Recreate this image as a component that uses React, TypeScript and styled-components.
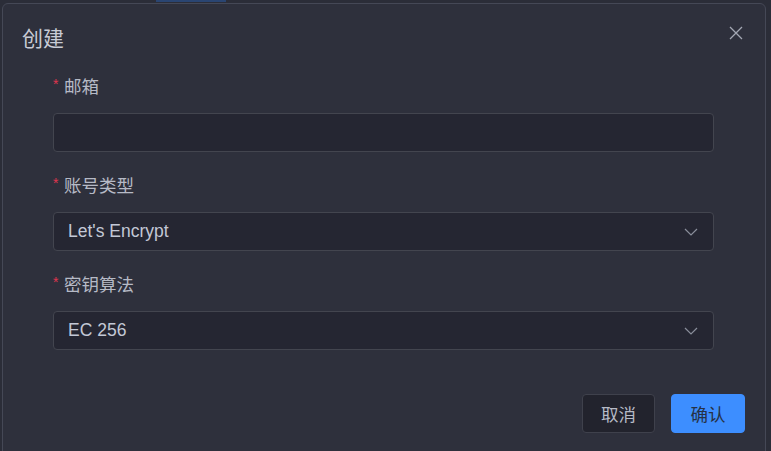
import React from 'react';
import styled, { createGlobalStyle } from 'styled-components';

const GlobalStyle = createGlobalStyle`
  html, body {
    margin: 0;
    padding: 0;
    background: #2b2d38;
    overflow: hidden;
    font-family: "Liberation Sans", "Noto Sans CJK SC", sans-serif;
  }
`;

const Page = styled.div`
  width: 771px;
  height: 451px;
  overflow: hidden;
`;

const TabLine = styled.div`
  width: 70px;
  height: 2px;
  margin-left: 156px;
  background: #2a4572;
`;

const Dialog = styled.div`
  box-sizing: border-box;
  width: 764px;
  height: 470px;
  margin: 1px 0 0 2px;
  background: #2e303c;
  border: 1px solid #454856;
  border-radius: 6px;
`;

const Header = styled.div`
  display: flex;
  justify-content: space-between;
  align-items: flex-start;
  padding: 20px 22px 0 19px;
`;

const Title = styled.div`
  font-size: 21px;
  line-height: 30px;
  color: #c8cbd5;
`;

const Close = styled.button`
  width: 14px;
  height: 14px;
  margin-top: 2px;
  padding: 0;
  border: none;
  background: transparent;
  display: flex;
  cursor: pointer;
`;

const Form = styled.div`
  width: 661px;
  margin: 19px 0 0 50px;
  display: flex;
  flex-direction: column;
  gap: 20px;
`;

const Item = styled.div`
  display: flex;
  flex-direction: column;
  gap: 16px;
`;

const Label = styled.div`
  display: flex;
  align-items: center;
  height: 24px;
  font-size: 17.5px;
  color: #b6bac6;
`;

const Star = styled.span`
  color: #e0354f;
  font-size: 14px;
  align-self: flex-start;
  margin-top: 3px;
  width: 11px;
`;

const Field = styled.div`
  box-sizing: border-box;
  height: 39px;
  display: flex;
  align-items: center;
  justify-content: space-between;
  padding: 0 15px 0 14px;
  background: #252632;
  border: 1px solid #43454f;
  border-radius: 4px;
  font-size: 17.5px;
  color: #c3c8d6;
`;

const Footer = styled.div`
  display: flex;
  justify-content: flex-end;
  gap: 16px;
  padding: 44px 20px 0 0;
`;

const Button = styled.button<{ $primary?: boolean }>`
  box-sizing: border-box;
  width: ${(p) => (p.$primary ? 74 : 73)}px;
  height: 39px;
  border-radius: 4px;
  border: 1px solid ${(p) => (p.$primary ? '#3d8eff' : '#3f414c')};
  background: ${(p) => (p.$primary ? '#3d8eff' : '#22232d')};
  color: ${(p) => (p.$primary ? '#263145' : '#b6bac6')};
  font-family: "Liberation Sans", "Noto Sans CJK SC", sans-serif;
  font-size: 17.5px;
  cursor: pointer;
`;

const Chevron = () => (
  <svg width="14" height="8" viewBox="0 0 14 8" fill="none">
    <path d="M1 1l6 6 6-6" stroke="#8a8e9b" strokeWidth="1.2" />
  </svg>
);

const App: React.FC = () => (
  <Page>
    <GlobalStyle />
    <TabLine />
    <Dialog>
      <Header>
        <Title>创建</Title>
        <Close aria-label="close">
          <svg width="14" height="14" viewBox="0 0 14 14" fill="none">
            <path d="M1 1l12 12M13 1L1 13" stroke="#a3a7b3" strokeWidth="1.3" />
          </svg>
        </Close>
      </Header>
      <Form>
        <Item>
          <Label>
            <Star>*</Star>邮箱
          </Label>
          <Field />
        </Item>
        <Item>
          <Label>
            <Star>*</Star>账号类型
          </Label>
          <Field>
            Let's Encrypt
            <Chevron />
          </Field>
        </Item>
        <Item>
          <Label>
            <Star>*</Star>密钥算法
          </Label>
          <Field>
            EC 256
            <Chevron />
          </Field>
        </Item>
      </Form>
      <Footer>
        <Button>取消</Button>
        <Button $primary>确认</Button>
      </Footer>
    </Dialog>
  </Page>
);

export default App;
